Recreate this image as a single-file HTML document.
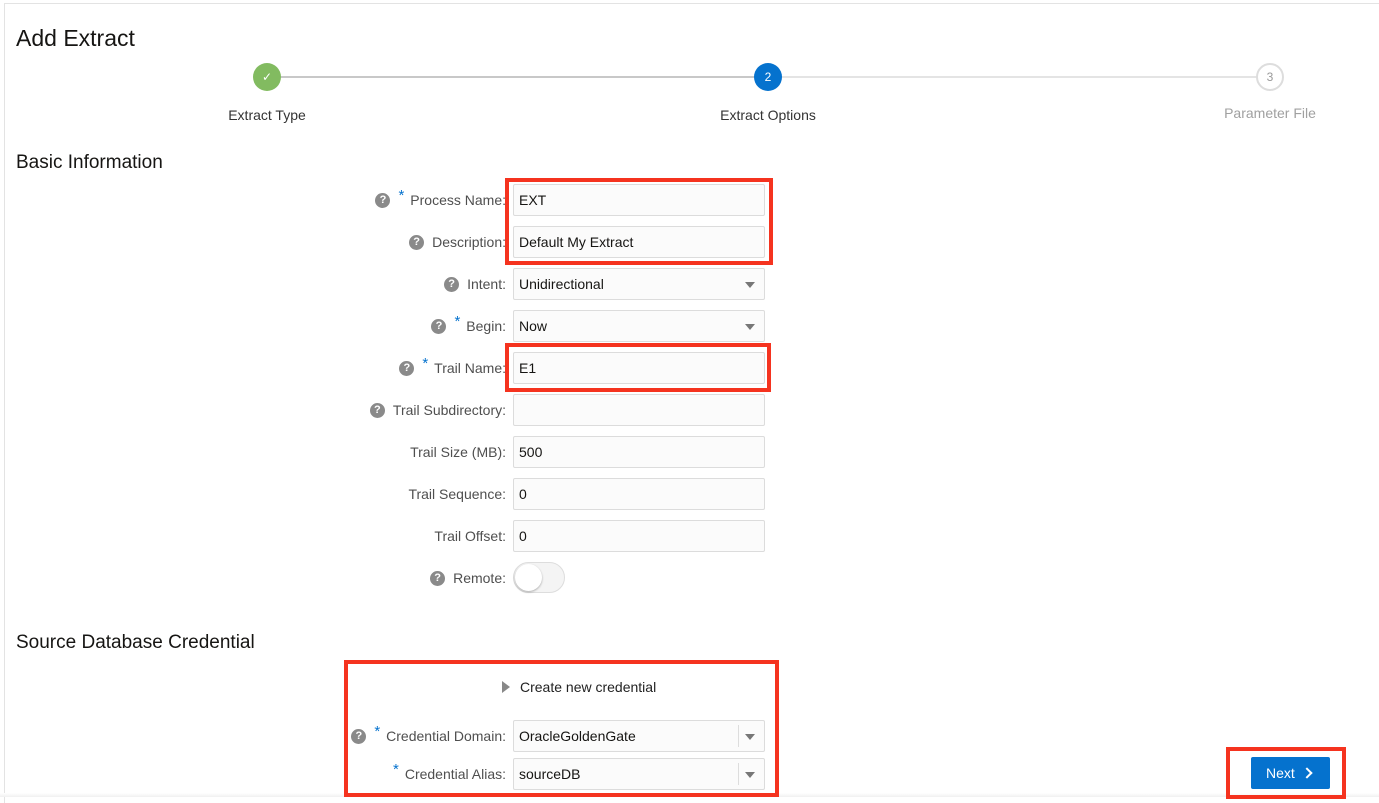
<!DOCTYPE html>
<html><head><meta charset="utf-8"><style>
*{box-sizing:border-box;margin:0;padding:0}
body{width:1379px;height:797px;background:#fff;font-family:"Liberation Sans",sans-serif;position:relative;overflow:hidden;color:#161513}
.a{position:absolute}
.frame{left:4px;top:3px;width:1380px;height:800px;border-top:1px solid #e3e3e3;border-left:1px solid #e3e3e3}
h1{position:absolute;left:16px;top:25px;font-size:23px;font-weight:normal;color:#161513}
h2{position:absolute;left:16px;font-size:19px;font-weight:normal;color:#161513}
.circ{position:absolute;width:28px;height:28px;border-radius:50%;color:#fff;font-size:12px;text-align:center;line-height:28px}
.step{position:absolute;font-size:14px;color:#333;transform:translateX(-50%);white-space:nowrap}
.lbl{position:absolute;right:873px;font-size:14px;color:#4f4f4f;white-space:nowrap;line-height:16px;height:16px;display:flex;align-items:center}
.q{display:inline-block;width:15px;height:15px;border-radius:50%;background:#8a8a8a;color:#fff;font-size:11px;font-weight:bold;text-align:center;line-height:15px;margin-right:8px}
.st{color:#0572ce;font-size:15px;margin-right:6px;position:relative;top:-4px}
.in{position:absolute;left:513px;width:252px;height:32px;border:1px solid #dcdcdc;border-radius:2px;background:#fbfbfb;font-size:14px;line-height:30px;padding-left:5px;color:#161513}
.arr{position:absolute;right:9px;top:13px;width:0;height:0;border-left:5px solid transparent;border-right:5px solid transparent;border-top:6px solid #777}
.red{position:absolute;border:4px solid #f5331f}
</style></head><body>
<div class="a frame"></div>
<h1>Add Extract</h1>
<div class="a" style="left:280px;top:76px;width:475px;height:2px;background:#c8c8c8"></div>
<div class="a" style="left:782px;top:76px;width:475px;height:2px;background:#e4e4e4"></div>
<div class="circ" style="left:253px;top:63px;background:#82bb60">✓</div>
<div class="circ" style="left:754px;top:63px;background:#0572ce">2</div>
<div class="circ" style="left:1256px;top:63px;background:#fff;border:2px solid #ddd;color:#999;line-height:24px">3</div>
<div class="step" style="left:267px;top:107px">Extract Type</div>
<div class="step" style="left:768px;top:107px">Extract Options</div>
<div class="step" style="left:1270px;top:105px;color:#a0a0a0">Parameter File</div>

<h2 style="top:152px">Basic Information</h2>

<div class="lbl" style="top:192px"><span class="q">?</span><span class="st">*</span>Process Name:</div>
<div class="in" style="top:184px">EXT</div>
<div class="lbl" style="top:234px"><span class="q">?</span>Description:</div>
<div class="in" style="top:226px">Default My Extract</div>
<div class="lbl" style="top:276px"><span class="q">?</span>Intent:</div>
<div class="in" style="top:268px">Unidirectional<div class="arr"></div></div>
<div class="lbl" style="top:318px"><span class="q">?</span><span class="st">*</span>Begin:</div>
<div class="in" style="top:310px">Now<div class="arr"></div></div>
<div class="lbl" style="top:360px"><span class="q">?</span><span class="st">*</span>Trail Name:</div>
<div class="in" style="top:352px">E1</div>
<div class="lbl" style="top:402px"><span class="q">?</span>Trail Subdirectory:</div>
<div class="in" style="top:394px"></div>
<div class="lbl" style="top:444px">Trail Size (MB):</div>
<div class="in" style="top:436px">500</div>
<div class="lbl" style="top:486px">Trail Sequence:</div>
<div class="in" style="top:478px">0</div>
<div class="lbl" style="top:528px">Trail Offset:</div>
<div class="in" style="top:520px">0</div>
<div class="lbl" style="top:570px"><span class="q">?</span>Remote:</div>
<div class="a" style="left:513px;top:562px;width:52px;height:31px;border:1px solid #ddd;border-radius:16px;background:#f4f4f4"><div class="a" style="left:1px;top:1px;width:27px;height:27px;border-radius:50%;background:#fff;box-shadow:0 1px 2px rgba(0,0,0,.3)"></div></div>

<h2 style="top:632px">Source Database Credential</h2>
<div class="a" style="left:502px;top:681px;width:0;height:0;border-top:6px solid transparent;border-bottom:6px solid transparent;border-left:8px solid #888"></div>
<div class="a" style="left:520px;top:679px;font-size:14px;color:#222">Create new credential</div>
<div class="lbl" style="top:728px"><span class="q">?</span><span class="st">*</span>Credential Domain:</div>
<div class="in" style="top:720px">OracleGoldenGate<div class="a" style="left:224px;top:4px;width:1px;height:22px;background:#ddd"></div><div class="arr"></div></div>
<div class="lbl" style="top:766px"><span class="st">*</span>Credential Alias:</div>
<div class="in" style="top:758px">sourceDB<div class="a" style="left:224px;top:4px;width:1px;height:22px;background:#ddd"></div><div class="arr"></div></div>

<div class="a" style="left:1251px;top:757px;width:79px;height:32px;background:#0572ce;border-radius:2px;color:#fff;font-size:14px;line-height:32px;padding-left:15px">Next<span style="position:absolute;left:52px;top:12px;width:8px;height:8px;border-right:2px solid #fff;border-top:2px solid #fff;transform:rotate(45deg)"></span></div>
<div class="a" style="left:0;top:793px;width:1379px;height:4px;background:linear-gradient(#fff,#f0f0f0)"></div>

<div class="red" style="left:505px;top:178px;width:268px;height:87px"></div>
<div class="red" style="left:505px;top:343px;width:266px;height:49px"></div>
<div class="red" style="left:344px;top:660px;width:435px;height:137px"></div>
<div class="red" style="left:1226px;top:747px;width:120px;height:52px"></div>
</body></html>
